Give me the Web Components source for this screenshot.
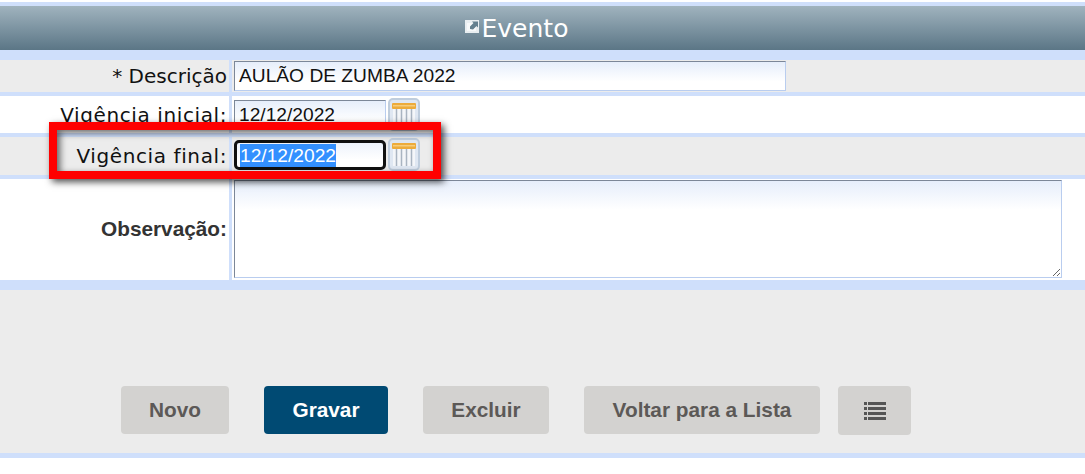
<!DOCTYPE html>
<html lang="pt-BR">
<head>
<meta charset="utf-8">
<title>Evento</title>
<style>
  html, body { margin: 0; background: #fff; }
</style>
</head>
<body>
<event-page>
  <title-bar>Evento</title-bar>
  <form-row style="--row-h:32px" tone="gray">
    <span slot="label">* Descrição</span>
    <text-box style="--box-w:552px;--box-h:30px">AULÃO DE ZUMBA 2022</text-box>
  </form-row>
  <form-row style="--row-h:37px" tone="white">
    <span slot="label" style="letter-spacing:.6px">Vigência inicial:</span>
    <date-box style="--box-top:4px">12/12/2022</date-box>
  </form-row>
  <form-row style="--row-h:38px" tone="gray">
    <span slot="label" style="letter-spacing:.6px">Vigência final:</span>
    <date-box style="--box-top:3px" selected>12/12/2022</date-box>
  </form-row>
  <form-row style="--row-h:101px" tone="white" bold>
    <span slot="label">Observação:</span>
    <note-box></note-box>
  </form-row>
  <action-bar>
    <action-button style="--w:108px">Novo</action-button>
    <action-button style="--w:124px;--ml:35px" primary>Gravar</action-button>
    <action-button style="--w:126px;--ml:35px">Excluir</action-button>
    <action-button style="--w:236px;--ml:35px">Voltar para a Lista</action-button>
    <action-button style="--w:73px;--ml:18px;--h:49px"><list-icon></list-icon></action-button>
  </action-bar>
  <red-box></red-box>
</event-page>

<script>
// small helper so each element only declares its css + markup
function shadow(el, html) {
  el.attachShadow({ mode: 'open' }).innerHTML = html;
}

class EventPage extends HTMLElement {
  constructor() {
    super();
    shadow(this, `
      <style>
        :host {
          display: flex;
          flex-direction: column;
          gap: 4px;
          position: relative;
          box-sizing: border-box;
          width: 1085px;
          margin-top: 2px;
          padding: 4px 0 5px;
          background: #cfdffb;
        }
      </style>
      <slot></slot>`);
  }
}

class TitleBar extends HTMLElement {
  constructor() {
    super();
    shadow(this, `
      <style>
        :host {
          display: flex;
          justify-content: center;
          align-items: center;
          height: 44px;
          margin-bottom: 6px;
          padding-right: 52px;
          background: linear-gradient(#a0b3be, #5b7686);
          color: #fff;
          font: 25px/1 "DejaVu Sans", sans-serif;
        }
        svg { margin: 0 2px 5px 0; }
      </style>
      <svg width="15" height="14" viewBox="0 0 15 14">
        <rect x="0" y="1" width="14" height="13" fill="#e9eef1"/>
        <rect x="2" y="4" width="9" height="8" fill="#f7f9fa"/>
        <path d="M5 10V7.500L8.500 4 7 2.500h6v6L11.500 7 8 10.500z" fill="#64808f"/>
      </svg>
      <slot></slot>`);
  }
}

class FormRow extends HTMLElement {
  constructor() {
    super();
    const tone = this.getAttribute('tone') === 'gray' ? '#ececec' : '#fff';
    const bold = this.hasAttribute('bold');
    shadow(this, `
      <style>
        :host {
          display: grid;
          grid-template-columns: 229px 1fr;
          column-gap: 3px;
          height: var(--row-h);
        }
        .label, .field { background: ${tone}; }
        .label {
          display: flex;
          justify-content: flex-end;
          align-items: center;
          padding-right: 2px;
          padding-bottom: ${bold ? '2px' : '0'};
          color: ${bold ? '#333' : '#111'};
          font: ${bold ? 'bold 20.800px "Liberation Sans"' : '20px "DejaVu Sans"'}, sans-serif;
        }
        .field { padding-left: 2px; min-width: 0; }
      </style>
      <div class="label"><slot name="label"></slot></div>
      <div class="field"><slot></slot></div>`);
  }
}

const boxCss = `
  .box {
    box-sizing: border-box;
    width: var(--box-w, 152px);
    height: var(--box-h, 30px);
    padding-left: 4px;
    display: flex;
    align-items: center;
    border: 1px solid;
    border-color: #7c8798 #b9cdef #b9cdef #7c8798;
    background: linear-gradient(#e6eefb, #fff 70%);
    color: #111;
    font: 19.200px "Liberation Sans", Arial, sans-serif;
    white-space: nowrap;
  }`;

class TextBox extends HTMLElement {
  constructor() {
    super();
    shadow(this, `
      <style>
        :host { display: block; padding-top: 1px; }
        ${boxCss}
      </style>
      <div class="box"><slot></slot></div>`);
  }
}

class DateBox extends HTMLElement {
  constructor() {
    super();
    const sel = this.hasAttribute('selected');
    shadow(this, `
      <style>
        :host {
          display: flex;
          align-items: flex-start;
          gap: 2px;
          padding-top: var(--box-top);
        }
        ${boxCss}
        .box.sel {
          border: 3px solid #111;
          border-radius: 5px;
          padding-left: 3px;
          background: linear-gradient(#eef3fc, #fff 70%);
        }
        .sel span {
          background: #3390ff;
          color: #fff;
          line-height: 23px;
        }
        svg { display: block; flex: none; margin-top: -2px; }
      </style>
      <div class="box ${sel ? 'sel' : ''}"><span><slot></slot></span></div>
      <svg width="32" height="33" viewBox="0 0 32 33">
        <rect x="1" y="1" width="30" height="31" rx="4" fill="#dfe7f2" stroke="#bfcddd" stroke-width="2"/>
        <rect x="5" y="10" width="22" height="18" fill="#f4f6f9"/>
        <path d="M8.500 11v17M13.500 11v17M18.500 11v17M23.500 11v17" stroke="#a9b4c1" stroke-width="1.500"/>
        <rect x="4" y="5" width="24" height="6" rx="1" fill="#edab3a"/>
        <rect x="5" y="7" width="22" height="1.500" fill="#f6cd7c"/>
      </svg>`);
  }
}

class NoteBox extends HTMLElement {
  constructor() {
    super();
    shadow(this, `
      <style>
        :host { display: block; padding-top: 1px; }
        textarea {
          display: block;
          box-sizing: border-box;
          width: 828px;
          height: 98px;
          margin: 0;
          border: 1px solid;
          border-color: #7c8798 #b9cdef #b9cdef #7c8798;
          background: linear-gradient(#e6eefb, #fff 30%);
        }
      </style>
      <textarea></textarea>`);
  }
}

class ActionBar extends HTMLElement {
  constructor() {
    super();
    shadow(this, `
      <style>
        :host {
          display: flex;
          align-items: flex-start;
          height: 163px;
          box-sizing: border-box;
          margin-top: 6px;
          padding: 96px 0 0 121px;
          background: #ececec;
        }
      </style>
      <slot></slot>`);
  }
}

class ActionButton extends HTMLElement {
  constructor() {
    super();
    const primary = this.hasAttribute('primary');
    shadow(this, `
      <style>
        :host {
          display: flex;
          justify-content: center;
          align-items: center;
          flex: none;
          box-sizing: border-box;
          width: var(--w);
          height: var(--h, 48px);
          margin-left: var(--ml, 0);
          border-radius: 4px;
          background: ${primary ? '#004a73' : '#d3d2d0'};
          color: ${primary ? '#fff' : '#5c5957'};
          font: bold 20.800px "Liberation Sans", Arial, sans-serif;
        }
      </style>
      <slot></slot>`);
  }
}

class ListIcon extends HTMLElement {
  constructor() {
    super();
    shadow(this, `
      <style>:host { display: block; height: 18px; } svg { display: block; }</style>
      <svg width="22" height="18" viewBox="0 0 22 18" fill="#555">
        <path d="M0 0h3v3H0zM4 0h18v3H4zM0 5h3v3H0zM4 5h18v3H4zM0 10h3v3H0zM4 10h18v3H4zM0 15h3v3H0zM4 15h18v3H4z"/>
      </svg>`);
  }
}

// annotation painted over the screenshot, sits on top of the form rows
class RedBox extends HTMLElement {
  constructor() {
    super();
    shadow(this, `
      <style>
        :host {
          position: absolute;
          left: 49px;
          top: 120px;
          box-sizing: border-box;
          width: 392px;
          height: 57px;
          border: 8px solid #f00;
          box-shadow: 3px 3px 7px rgba(0, 0, 0, .7), inset 3px 3px 7px rgba(0, 0, 0, .6);
          pointer-events: none;
        }
      </style>`);
  }
}

customElements.define('event-page', EventPage);
customElements.define('title-bar', TitleBar);
customElements.define('form-row', FormRow);
customElements.define('text-box', TextBox);
customElements.define('date-box', DateBox);
customElements.define('note-box', NoteBox);
customElements.define('action-bar', ActionBar);
customElements.define('action-button', ActionButton);
customElements.define('list-icon', ListIcon);
customElements.define('red-box', RedBox);
</script>
</body>
</html>
